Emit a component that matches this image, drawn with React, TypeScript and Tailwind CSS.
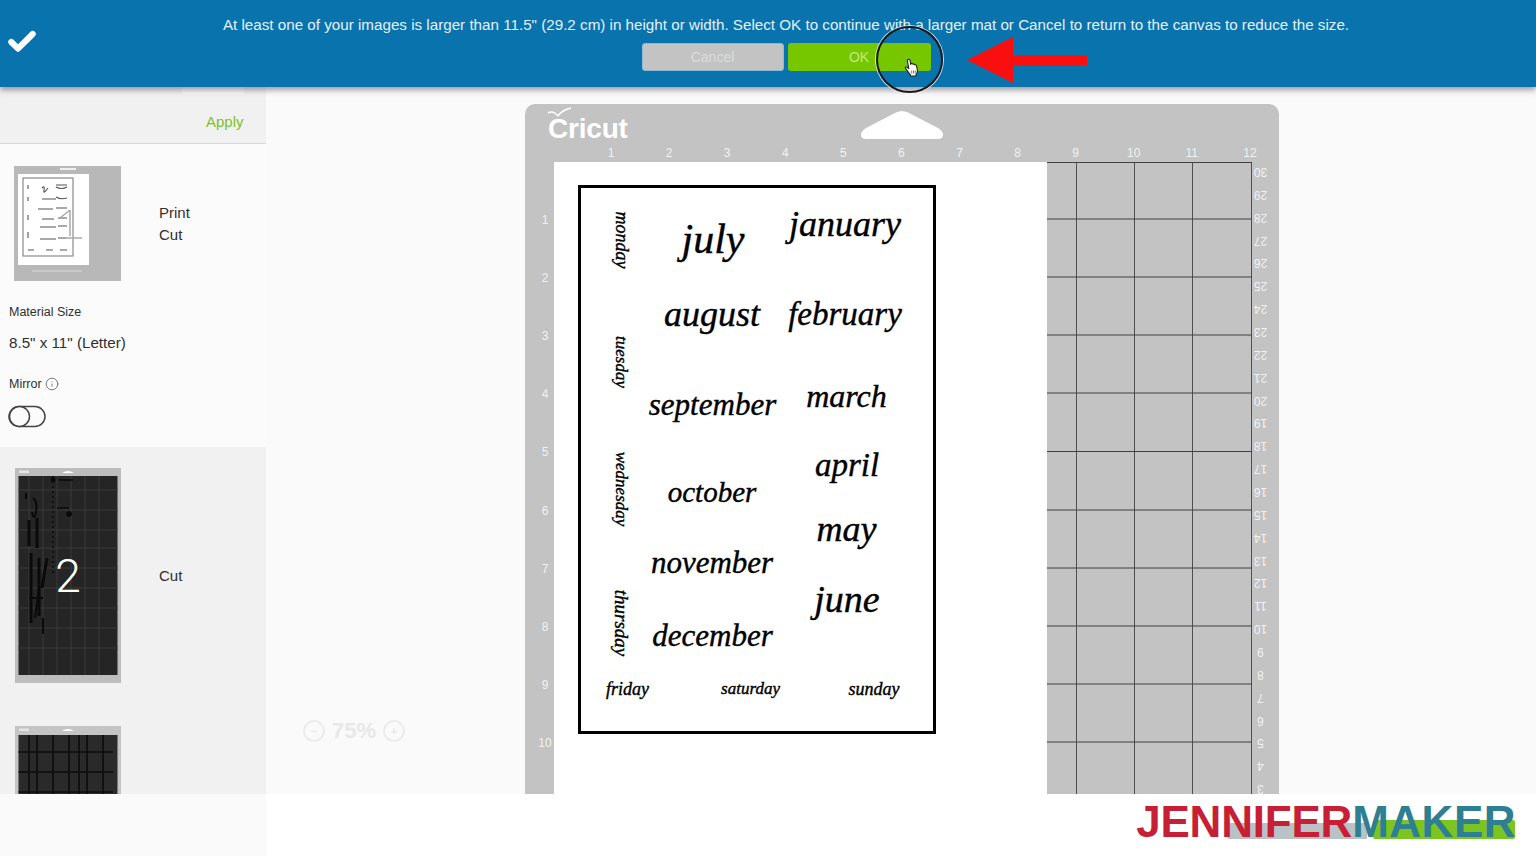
import React from "react";
import { Check, Info } from "lucide-react";

const sans = "font-['Liberation_Sans',Arial,sans-serif]";

const words = [
  { t: "july", c: "left-[100px] top-[24px] w-[64px] h-[53px] text-[42px]" },
  { t: "january", c: "left-[206px] top-[16px] w-[116px] h-[39px] text-[36px]" },
  { t: "august", c: "left-[83px] top-[103px] w-[96px] h-[45px] text-[36px]" },
  { t: "february", c: "left-[206px] top-[99px] w-[116px] h-[54px] text-[33px]" },
  { t: "september", c: "left-[68px] top-[189px] w-[127px] h-[55px] text-[31px]" },
  { t: "march", c: "left-[224px] top-[188px] w-[83px] h-[40px] text-[32px]" },
  { t: "october", c: "left-[86px] top-[285px] w-[90px] h-[38px] text-[29px]" },
  { t: "april", c: "left-[233px] top-[250px] w-[66px] h-[54px] text-[33px]" },
  { t: "november", c: "left-[69px] top-[355px] w-[124px] h-[39px] text-[31px]" },
  { t: "may", c: "left-[235px] top-[321px] w-[61px] h-[39px] text-[36px]" },
  { t: "december", c: "left-[71px] top-[427px] w-[121px] h-[40px] text-[31px]" },
  { t: "june", c: "left-[233px] top-[392px] w-[66px] h-[38px] text-[38px]" },
  { t: "friday", c: "left-[24px] top-[487px] w-[45px] h-[27px] text-[18px]" },
  { t: "saturday", c: "left-[139px] top-[487px] w-[61px] h-[27px] text-[17px]" },
  { t: "sunday", c: "left-[267px] top-[487px] w-[52px] h-[27px] text-[18px]" },
  { t: "monday", c: "left-[12px] top-[38px] w-[58px] h-[28px] text-[18px] rotate-90" },
  { t: "tuesday", c: "left-[14px] top-[160px] w-[54px] h-[28px] text-[17px] rotate-90" },
  { t: "wednesday", c: "left-[3px] top-[287px] w-[76px] h-[28px] text-[17px] rotate-90" },
  { t: "thursday", c: "left-[8px] top-[421px] w-[66px] h-[28px] text-[19px] rotate-90" },
];

const horizontal = [57, 115, 173, 231, 289.5, 348, 406, 464, 522, 580];

function MiniSheet() {
  return (
    <svg viewBox="0 0 107 115" className="block w-[107px] h-[115px]">
      <rect width="107" height="115" fill="#b8b8b8" />
      <rect x="4" y="8" width="71" height="91" fill="#ffffff" />
      <rect x="9" y="12" width="50" height="78" fill="#ffffff" stroke="#8a8a8a" strokeWidth="1.2" />
      <g stroke="#555555" strokeWidth="1.1" fill="none">
        <path d="M28 22q3-3 2 2t4-2M42 19h11M42 21q5 3 11 0" />
        <path d="M28 33h14M42 31q5 3 11 1" />
        <path d="M24 43h15M42 42h11" />
        <path d="M28 53h12M44 52h9" />
        <path d="M26 61h16M44 60h9" />
        <path d="M26 73h16M44 72h8" />
        <path d="M14 84h6M32 84h7M46 84h7" />
        <path d="M14 19v4M14 31v4M14 49v5M14 66v6" />
      </g>
      <path d="M46 52l10-8M56 44v26M46 72h22" stroke="#a9a9a9" strokeWidth="1.5" fill="none" />
      <path d="M18 105h50" stroke="#dddddd" strokeWidth="1" />
      <path d="M46 3h16" stroke="#eeeeee" strokeWidth="2" />
    </svg>
  );
}

function MiniHeader() {
  return (
    <g>
      <rect x="4" y="2.5" width="10" height="2.5" fill="#e5e5e5" />
      <path d="M47 5q6-4 12 0z" fill="#ffffff" />
    </g>
  );
}

function DarkThumb() {
  const xs = [14, 28, 42, 56, 70, 84];
  const ys = [22, 42, 62, 80, 100, 120, 140, 160, 180];
  return (
    <svg viewBox="0 0 106 215" className="block w-[106px] h-[215px]">
      <rect width="106" height="215" fill="#bdbdbd" />
      <MiniHeader />
      <rect x="3.5" y="8" width="99" height="199" fill="#252525" />
      <g stroke="#3b3b3b" strokeWidth="1">
        {xs.map((x) => (
          <line key={x} x1={x} x2={x} y1="8" y2="207" />
        ))}
        {ys.map((y) => (
          <line key={y} y1={y} y2={y} x1="3.5" x2="102.5" />
        ))}
      </g>
      <g stroke="#0a0a0a" fill="none">
        <path d="M11 25v6M18 30q5 4 3 14t-4 0" strokeWidth="2" />
        <path d="M14 52v26M22 50v30M32 90l-5 30M16 85v70M24 90v58" strokeWidth="3" />
        <path d="M24 120l-4 30M14 130h14M28 150v16" strokeWidth="2" />
        <path d="M38 8v100" strokeWidth="1.5" strokeDasharray="2 3" />
        <circle cx="38" cy="12" r="2" fill="#0a0a0a" />
        <circle cx="54" cy="46" r="2.5" fill="#0a0a0a" />
        <path d="M44 12h14M42 40h12" strokeWidth="1.5" />
      </g>
    </svg>
  );
}

function DarkThumbCut() {
  const xs = [14, 22, 38, 54, 64, 72, 88];
  const ys = [26, 46, 66];
  return (
    <svg viewBox="0 0 106 68" className="block w-[106px] h-[68px]">
      <rect width="106" height="68" fill="#c4c4c4" />
      <MiniHeader />
      <rect x="3.5" y="9" width="99" height="59" fill="#2a2a2a" />
      <g stroke="#0c0c0c" strokeWidth="1.6">
        {xs.map((x) => (
          <line key={x} x1={x} x2={x} y1="9" y2="68" />
        ))}
        {ys.map((y) => (
          <line key={y} y1={y} y2={y} x1="3.5" x2="98" />
        ))}
      </g>
    </svg>
  );
}

export default function App() {
  return (
    <div className={`relative w-[1536px] h-[856px] overflow-hidden bg-[#fafafa] flex flex-col ${sans}`}>
      {/* banner */}
      <div className="relative z-20 h-[87px] shrink-0 bg-[#0873ad] shadow-[0_3px_6px_rgba(40,40,50,0.45)] flex">
        <div className="w-[36px] shrink-0 pl-[6px] pt-[26px]">
          <Check size={32} strokeWidth={4.6} className="text-white" />
        </div>
        <div className="flex-1 flex flex-col items-center pt-[16px]">
          <p className="h-[18px] text-[15.2px] leading-[18px] text-[#e6f0f6] whitespace-nowrap">
            At least one of your images is larger than 11.5" (29.2 cm) in height or width. Select OK to continue with a larger mat or Cancel to return to the canvas to reduce the size.
          </p>
          <div className="mt-[9px] flex gap-[4px]">
            <button className="w-[142px] h-[28px] rounded-[3px] bg-[#c3c3c3] border border-[#8fb9d6] text-[14px] text-[#dcdcdc]">
              Cancel
            </button>
            <button className="w-[143px] h-[28px] rounded-[3px] bg-[#76c700] text-[14px] text-[#c5e87f]">OK</button>
          </div>
        </div>
        {/* click ring */}
        <div className="absolute left-[876px] top-[26px] w-[67px] h-[67px] rounded-full border-2 border-[#1a1a1a] shadow-[0_0_0_1px_rgba(255,255,255,0.8)]" />
        {/* hand cursor */}
        <svg viewBox="0 0 16 20" className="absolute left-[904px] top-[58px] w-[16px] h-[20px]">
          <path
            d="M4 1.5c.9-.6 2 0 2.100 1l.6 4 .3-.9c.9-.5 1.700-.1 1.900.7 .8-.5 1.600-.2 1.900.6 .9-.3 1.600.2 1.800 1l.8 4.500c.2 1.600-.4 3-1.400 4.100v1.500H6.500l-.2-1.300C4.900 15 3.200 12.600 1.500 10.400c-.6-.9.4-2 1.500-1.300l1.800 1.500L3.400 3c-.1-.6.1-1.200.6-1.500z"
            fill="#ffffff"
            stroke="#222222"
            strokeWidth="1.100"
            strokeLinejoin="round"
          />
          <path d="M7.700 12.500v3M9.500 12.500v3M11.300 12.500v3" stroke="#555555" strokeWidth="0.8" />
        </svg>
        {/* red arrow */}
        <svg viewBox="0 0 122 48" className="absolute left-[966px] top-[36px] w-[122px] h-[48px]">
          <path d="M1 24 47 1v18.500h74v10H47V47z" fill="#f90f0f" />
        </svg>
      </div>

      {/* middle */}
      <div className="h-[707px] shrink-0 flex overflow-hidden">
        <aside className="w-[266px] shrink-0 flex flex-col text-[#2f2f2f]">
          <div className="h-[57px] shrink-0 bg-[#f1f1f1] border-b border-[#dadada]">
            <div className="ml-[182px] w-[62px] h-[7px] bg-[#fafafa]" />
            <div className="mt-[18px] ml-[206px] text-[15px] leading-[20px] text-[#7cc11f]">Apply</div>
          </div>
          <div className="h-[303px] shrink-0 bg-[#fbfbfb] pt-[22px] pl-[14px]">
            <div className="flex items-center">
              <MiniSheet />
              <div className="ml-[38px] text-[15px] leading-[22px]">
                <div>Print</div>
                <div>Cut</div>
              </div>
            </div>
            <div className="mt-[22px] -ml-[5px] text-[12.500px] leading-[18px]">Material Size</div>
            <div className="mt-[13px] -ml-[5px] text-[15.200px] leading-[18px]">8.5" x 11" (Letter)</div>
            <div className="mt-[23px] -ml-[5px] flex items-center gap-[3px] text-[12.500px] leading-[18px]">
              Mirror <Info size={14} strokeWidth={1.3} className="text-[#555555]" />
            </div>
            <svg viewBox="0 0 38 23" className="mt-[12px] -ml-[6px] block w-[38px] h-[23px]">
              <rect x="1" y="1.500" width="36" height="20" rx="10" fill="none" stroke="#444444" strokeWidth="1.500" />
              <circle cx="11.500" cy="11.500" r="10" fill="#fbfbfb" stroke="#444444" strokeWidth="1.500" />
            </svg>
          </div>
          <div className="flex-1 bg-[#f1f1f1] pt-[21px] pl-[15px] overflow-hidden">
            <div className="flex items-center">
              <div className="relative w-[106px] h-[215px] flex items-center justify-center">
                <div className="absolute inset-0">
                  <DarkThumb />
                </div>
                <span className="relative font-['Roboto',sans-serif] font-light text-[46px] leading-none text-white">2</span>
              </div>
              <div className="ml-[38px] text-[15px] leading-[22px]">Cut</div>
            </div>
            <div className="mt-[43px]">
              <DarkThumbCut />
            </div>
          </div>
        </aside>

        {/* canvas */}
        <main className="relative flex-1 pl-[259px] pt-[17px] bg-[#fafafa]">
          <div className="absolute left-[37px] top-[632px] flex items-center gap-[7px] text-[#e8e8e8] font-bold text-[22px] leading-[24px]">
            <span className="w-[22px] h-[22px] rounded-full border-2 border-[#ececec] flex items-center justify-center text-[11px] leading-none">−</span>
            <span>75%</span>
            <span className="w-[22px] h-[22px] rounded-full border-2 border-[#ececec] flex items-center justify-center text-[11px] leading-none">+</span>
          </div>

          <div className="w-[754px] h-[720px] rounded-t-[10px] bg-[#c3c3c3] flex flex-col">
            {/* mat head */}
            <div className="h-[43px] shrink-0 flex items-start pl-[23px] pt-[7px]">
              <div className="relative w-[312px] h-[30px] text-[28px] leading-[30px] font-bold text-white tracking-[-0.2px]">
                <svg viewBox="0 0 28 16" className="absolute -left-[1px] -top-[4px] w-[28px] h-[16px]">
                  <path d="M1 6q5-3 10 3M11 9Q15 3 24 1" fill="none" stroke="#ffffff" strokeWidth="1.500" />
                </svg>
                <span className="relative top-[3px]">Cricut</span>
              </div>
              <svg viewBox="0 0 84 29" className="block w-[84px] h-[29px]">
                <path d="M42 0 L47 1 L78 17 Q84 21 83 25 Q82 28 78 28 H6 Q2 28 1 25 Q0 21 6 17 L37 1z" fill="#ffffff" />
              </svg>
            </div>
            <div className="h-[15px] shrink-0 pl-[57px] flex text-[12px] leading-[13px] text-[#f2f2f2]">
              {[1, 2, 3, 4, 5, 6, 7, 8, 9, 10, 11, 12].map((n) => (
                <span key={n} className="w-[58.100px] text-center">
                  {n}
                </span>
              ))}
            </div>
            {/* mat body */}
            <div className="flex-1 flex">
              <div className="w-[29px] shrink-0 pt-[29px] flex flex-col text-[12px] text-[#f2f2f2]">
                {[1, 2, 3, 4, 5, 6, 7, 8, 9, 10].map((n) => (
                  <span key={n} className="h-[58.100px] shrink-0 flex items-center justify-center pl-[11px]">
                    {n}
                  </span>
                ))}
              </div>
              <div className="relative w-[493px] shrink-0 bg-white">
                <div className="absolute left-[24px] top-[23px] w-[358px] h-[549px] border-[3px] border-black font-['Liberation_Serif',serif] italic text-black">
                  {words.map((w) => (
                    <span
                      key={w.t}
                      className={`absolute flex items-center justify-center whitespace-nowrap leading-none [-webkit-text-stroke:0.4px_black] ${w.c}`}
                    >
                      {w.t}
                    </span>
                  ))}
                </div>
              </div>
              <svg viewBox="0 0 205 640" className="block w-[205px] h-[640px] shrink-0">
                {[29, 87, 145, 204].map((x) => (
                  <line key={x} x1={x + 0.5} x2={x + 0.5} y1="0" y2="640" stroke="#4f4f4f" strokeWidth="1" />
                ))}
                {[0.5, ...horizontal].map((y) => (
                  <line key={y} x1="0" x2="205" y1={y} y2={y} stroke="#404040" strokeWidth="1" />
                ))}
              </svg>
              <div className="flex-1 -mt-[2px] flex flex-col text-[12px] text-[#f2f2f2]">
                {Array.from({ length: 28 }, (_, i) => 30 - i).map((n) => (
                  <span key={n} className="h-[22.870px] shrink-0 flex items-center justify-center pl-[10px] rotate-180">
                    {n}
                  </span>
                ))}
              </div>
            </div>
          </div>
        </main>
      </div>

      {/* footer */}
      <div className="relative z-10 flex-1 flex bg-white">
        <div className="w-[266px] shrink-0 bg-[#fafafa]" />
        <div className="flex-1 flex justify-end items-start pr-[20px] pt-[4px]">
          <div className="relative flex h-[48px] text-[44px] leading-[48px] font-bold">
            <div className="absolute left-[92px] top-[25px] w-[139px] h-[16px] bg-[#b9c2c4]" />
            <div className="absolute left-[237px] top-[22px] w-[142px] h-[19px] rounded-[2px] bg-[#7cc520]" />
            <span className="relative text-[#c71f35] tracking-[-0.2px]">JENNIFER</span>
            <span className="relative text-[#2f7f92] tracking-[0.5px]">MAKER</span>
          </div>
        </div>
      </div>
    </div>
  );
}
